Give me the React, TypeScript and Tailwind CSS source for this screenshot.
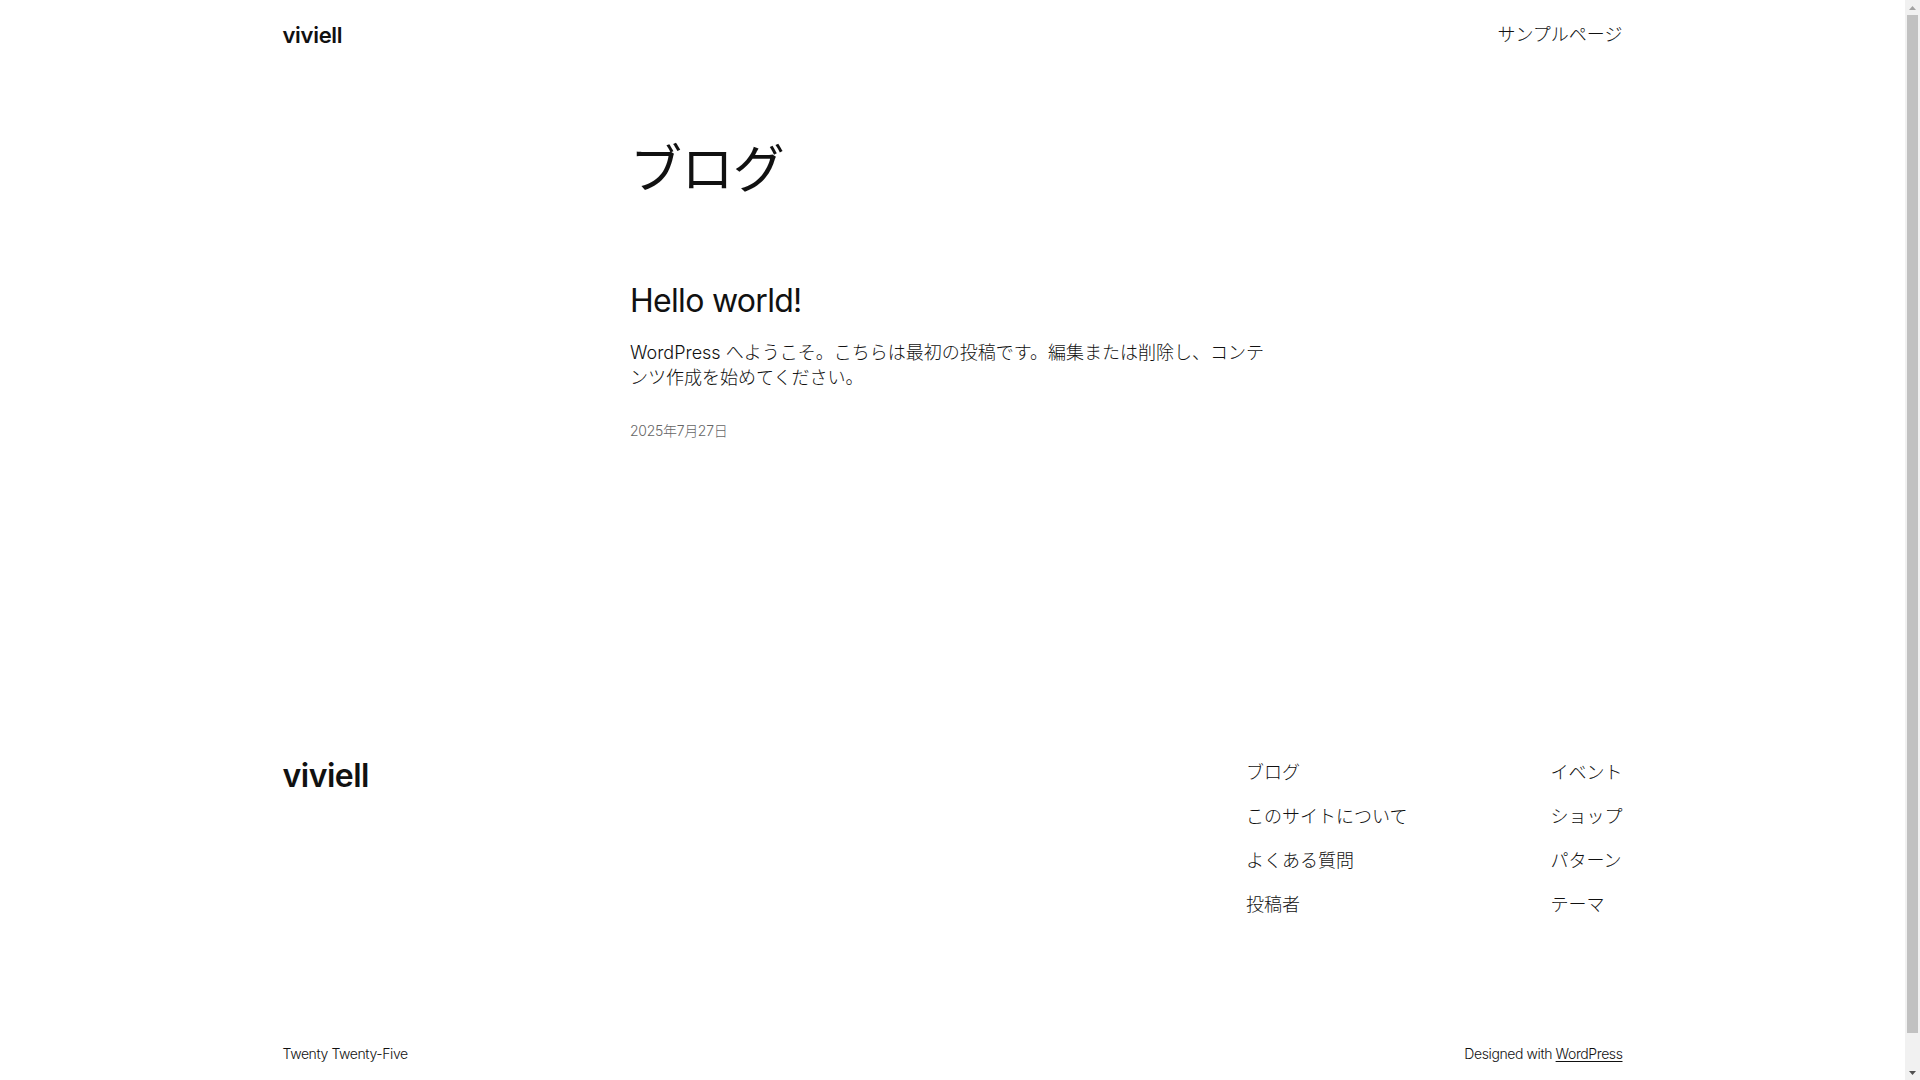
import React from "react";

const FONT = "font-['Inter','Noto_Sans_CJK_JP',sans-serif]";

function Scrollbar() {
  return (
    <aside className="sticky top-0 w-[15px] h-[1080px] shrink-0 bg-[#f1f1f1] flex flex-col items-center">
      <div className="h-[15px] w-full flex items-center justify-center">
        <svg width="7" height="4" viewBox="0 0 7 4">
          <polygon points="3.5,0 7,4 0,4" fill="#a3a3a3" />
        </svg>
      </div>
      <div className="w-[11px] h-[1018px] bg-[#c1c1c1]" />
      <div className="flex-1" />
      <div className="h-[15px] w-full flex items-center justify-center">
        <svg width="7" height="4" viewBox="0 0 7 4">
          <polygon points="0,0 7,0 3.5,4" fill="#505050" />
        </svg>
      </div>
    </aside>
  );
}

export default function App() {
  return (
    <div className={`flex items-start bg-white text-[#111111] ${FONT}`}>
      <div className="flex-1 min-h-[1114px] flex flex-col">
        {/* Header */}
        <header className="w-[1340px] mx-auto h-[68px] flex items-center justify-between">
          <a href="#" className="pt-[3px] text-[22px] leading-[1.2] font-semibold tracking-[-0.3px]">
            viviell
          </a>
          <nav>
            <a href="#" className="pt-[2px] block text-[18px] leading-[1.4] font-light">
              サンプルページ
            </a>
          </nav>
        </header>

        {/* Main */}
        <main className="w-[645px] mx-auto">
          <h1 className="mt-[71px] text-[52px] leading-[1.2] font-normal tracking-[-0.6px]">
            ブログ
          </h1>
          <article className="mt-[81px]">
            <h2 className="text-[32px] leading-[1.2] font-normal tracking-[-0.7px]">
              <a href="#">Hello world!</a>
            </h2>
            <p className="mt-[19px] text-[18px] leading-[1.4] font-light">
              WordPress へようこそ。こちらは最初の投稿です。編集または削除し、コンテンツ作成を始めてください。
            </p>
            <div className="mt-[31px] text-[14px] leading-[1.4] font-light text-[#666666] tracking-[-0.3px]">
              2025年7月27日
            </div>
          </article>
        </main>

        {/* Footer */}
        <footer className="w-[1340px] mx-auto mt-[319px]">
          <div className="flex justify-between items-start">
            <a href="#" className="text-[32px] leading-[1] font-semibold tracking-[-0.5px]">
              viviell
            </a>
            <div className="flex items-start gap-[143px]">
              <nav className="flex flex-col gap-[19px] text-[18px] leading-[1.4] font-light">
                <a href="#">ブログ</a>
                <a href="#">このサイトについて</a>
                <a href="#">よくある質問</a>
                <a href="#">投稿者</a>
              </nav>
              <nav className="flex flex-col gap-[19px] text-[18px] leading-[1.4] font-light">
                <a href="#">イベント</a>
                <a href="#">ショップ</a>
                <a href="#">パターン</a>
                <a href="#">テーマ</a>
              </nav>
            </div>
          </div>
          <div className="mt-[126px] pb-[51px] flex justify-between items-center text-[14px] leading-[1.4] font-light tracking-[-0.4px]">
            <span>Twenty Twenty-Five</span>
            <span>
              Designed with{" "}
              <a href="#" className="underline underline-offset-2">
                WordPress
              </a>
            </span>
          </div>
        </footer>
      </div>
      <Scrollbar />
    </div>
  );
}
